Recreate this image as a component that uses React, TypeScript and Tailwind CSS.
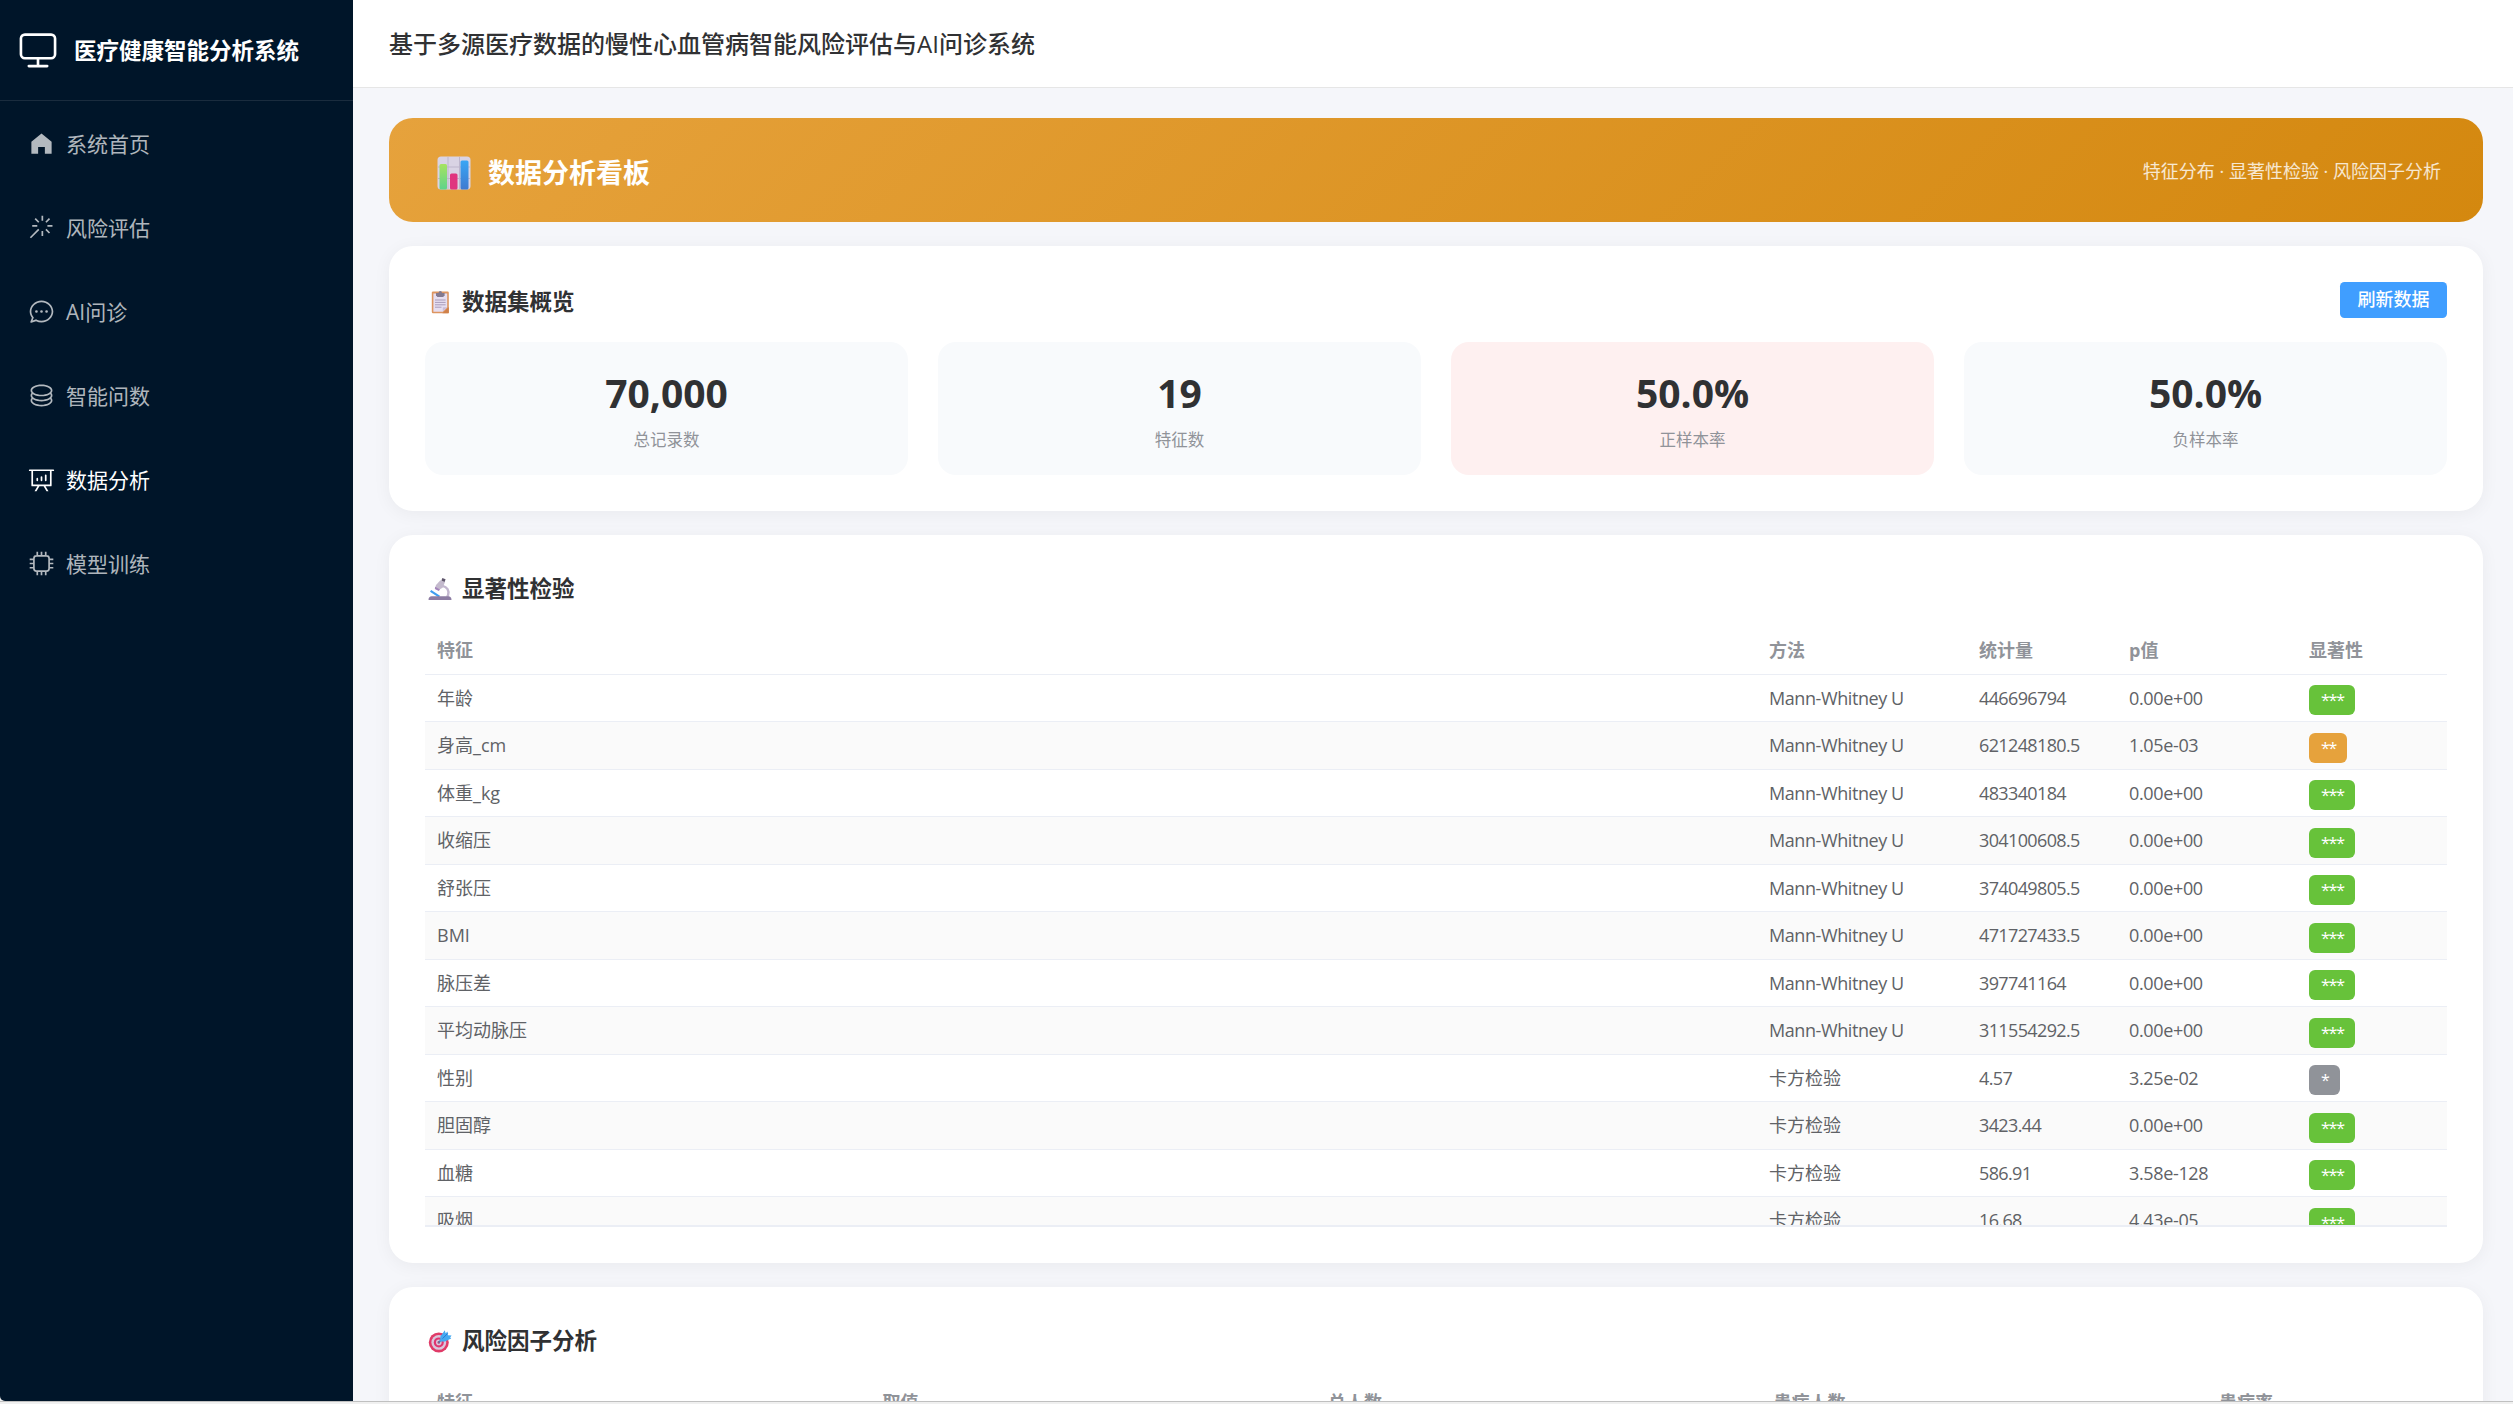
import type { ReactNode } from 'react';

const ICONS = {
  monitor:
    'M544 768v128h192a32 32 0 1 1 0 64H288a32 32 0 1 1 0-64h192V768H192A128 128 0 0 1 64 640V256a128 128 0 0 1 128-128h640a128 128 0 0 1 128 128v384a128 128 0 0 1-128 128zM192 192a64 64 0 0 0-64 64v384a64 64 0 0 0 64 64h640a64 64 0 0 0 64-64V256a64 64 0 0 0-64-64z',
  home: 'M512 128 128 447.936V896h255.936V640H640v256h255.936V447.936z',
  magic:
    'M512 64h64v192h-64zm0 576h64v192h-64zM160 480v-64h192v64zm576 0v-64h192v64zM249.856 199.04l45.248-45.184L430.848 289.6 385.6 334.848 249.856 199.104zM657.152 606.4l45.248-45.248 135.744 135.744-45.248 45.248zM114.048 923.2 68.8 877.952l316.8-316.8 45.248 45.248zM702.4 334.848 657.152 289.6l135.744-135.744 45.248 45.248z',
  chat: 'm174.72 855.68 135.296-45.12 23.68 11.84C388.096 849.536 448.576 864 512 864c211.84 0 384-166.784 384-352S723.84 160 512 160 128 326.784 128 512c0 69.12 24.96 139.264 70.848 199.232l22.08 28.8-46.272 115.584zm-45.248 82.56A32 32 0 0 1 89.6 896l58.368-145.92C94.72 680.32 64 596.864 64 512 64 299.904 256 96 512 96s448 203.904 448 416-192 416-448 416a461.056 461.056 0 0 1-206.912-48.384l-175.616 58.56zM512 563.2a51.2 51.2 0 1 1 0-102.4 51.2 51.2 0 0 1 0 102.4m192 0a51.2 51.2 0 1 1 0-102.4 51.2 51.2 0 0 1 0 102.4m-384 0a51.2 51.2 0 1 1 0-102.4 51.2 51.2 0 0 1 0 102.4',
  coin: 'm161.92 580.736 29.888 58.88C171.328 659.776 160 681.728 160 704c0 82.304 155.328 160 352 160s352-77.696 352-160c0-22.272-11.392-44.16-31.808-64.32l30.464-58.432C903.936 615.808 928 657.664 928 704c0 129.728-188.544 224-416 224S96 833.728 96 704c0-46.592 24.32-88.576 65.92-123.264zM161.92 388.736l29.888 58.88C171.328 467.84 160 489.792 160 512c0 82.304 155.328 160 352 160s352-77.696 352-160c0-22.272-11.392-44.16-31.808-64.32l30.464-58.432C903.936 423.808 928 465.664 928 512c0 129.728-188.544 224-416 224S96 641.728 96 512c0-46.592 24.32-88.576 65.92-123.264zM512 544c-227.456 0-416-94.272-416-224S284.544 96 512 96s416 94.272 416 224-188.544 224-416 224m0-64c196.672 0 352-77.696 352-160S708.672 160 512 160s-352 77.696-352 160 155.328 160 352 160',
  analysis:
    'm665.216 768 110.848 192h-73.856L591.36 768H433.024L322.176 960H248.32l110.848-192H160a32 32 0 0 1-32-32V192H64a32 32 0 0 1 0-64h896a32 32 0 1 1 0 64h-64v544a32 32 0 0 1-32 32zM832 192H192v512h640zM352 448a32 32 0 0 1 32 32v64a32 32 0 0 1-64 0v-64a32 32 0 0 1 32-32m160-64a32 32 0 0 1 32 32v128a32 32 0 0 1-64 0V416a32 32 0 0 1 32-32m160-64a32 32 0 0 1 32 32v192a32 32 0 1 1-64 0V352a32 32 0 0 1 32-32',
  cpu: 'M320 256a64 64 0 0 0-64 64v384a64 64 0 0 0 64 64h384a64 64 0 0 0 64-64V320a64 64 0 0 0-64-64zm0-64h384a128 128 0 0 1 128 128v384a128 128 0 0 1-128 128H320a128 128 0 0 1-128-128V320a128 128 0 0 1 128-128M480 64h64v160h-64zM640 64h64v160h-64zM320 64h64v160h-64zM480 800h64v160h-64zM640 800h64v160h-64zM320 800h64v160h-64zM64 480h160v64H64zM64 320h160v64H64zM64 640h160v64H64zM800 480h160v64H800zM800 320h160v64H800zM800 640h160v64H800z',
};

type IconName = keyof typeof ICONS;

const menu: { label: string; icon: IconName; active?: boolean }[] = [
  { label: '系统首页', icon: 'home' },
  { label: '风险评估', icon: 'magic' },
  { label: 'AI问诊', icon: 'chat' },
  { label: '智能问数', icon: 'coin' },
  { label: '数据分析', icon: 'analysis', active: true },
  { label: '模型训练', icon: 'cpu' },
];

const stats = [
  { value: '70,000', label: '总记录数' },
  { value: '19', label: '特征数' },
  { value: '50.0%', label: '正样本率', danger: true },
  { value: '50.0%', label: '负样本率' },
];

const MW = 'Mann-Whitney U';
const CHI = '卡方检验';

const tests = [
  ['年龄', MW, '446696794', '0.00e+00', '***'],
  ['身高_cm', MW, '621248180.5', '1.05e-03', '**'],
  ['体重_kg', MW, '483340184', '0.00e+00', '***'],
  ['收缩压', MW, '304100608.5', '0.00e+00', '***'],
  ['舒张压', MW, '374049805.5', '0.00e+00', '***'],
  ['BMI', MW, '471727433.5', '0.00e+00', '***'],
  ['脉压差', MW, '397741164', '0.00e+00', '***'],
  ['平均动脉压', MW, '311554292.5', '0.00e+00', '***'],
  ['性别', CHI, '4.57', '3.25e-02', '*'],
  ['胆固醇', CHI, '3423.44', '0.00e+00', '***'],
  ['血糖', CHI, '586.91', '3.58e-128', '***'],
  ['吸烟', CHI, '16.68', '4.43e-05', '***'],
];

const tagColor: Record<string, string> = {
  '***': 'bg-[#67c23a]',
  '**': 'bg-[#e6a23c]',
  '*': 'bg-[#909399]',
};

const TEST_COLS = 'grid grid-cols-[1332px_210px_150px_180px_150px]';
const RISK_COLS = 'grid grid-cols-[445.5px_445.5px_445.5px_445.5px_240px]';
const HEAD_ROW = 'h-12 items-center border-b border-[#ebeef5] pb-[2px] text-lg leading-none font-bold text-[#909399]';

function Icon({ name, className }: { name: IconName; className: string }) {
  return (
    <svg viewBox="0 0 1024 1024" fill="currentColor" className={className}>
      <path d={ICONS[name]} />
    </svg>
  );
}

function ChartEmoji() {
  return (
    <svg viewBox="0 0 34 34" className="h-[34px] w-[34px] shrink-0">
      <rect x="0.5" y="0.5" width="33" height="33" rx="3.5" fill="#d9d3e4" />
      <path d="M11 1v32M22.5 1v32M1 11h32M1 22.5h32" stroke="#bdb5cc" strokeWidth="1" />
      <rect x="2.5" y="8" width="7.5" height="25.5" rx="1.5" fill="url(#bar-green)" />
      <rect x="13" y="17.5" width="7.5" height="16" rx="1.5" fill="#e0357f" />
      <rect x="23.5" y="4.5" width="8" height="29" rx="1.5" fill="url(#bar-blue)" />
      <defs>
        <linearGradient id="bar-green" x1="0" y1="0" x2="0" y2="1">
          <stop offset="0" stopColor="#a6e35f" />
          <stop offset="1" stopColor="#5fd38c" />
        </linearGradient>
        <linearGradient id="bar-blue" x1="0" y1="0" x2="0" y2="1">
          <stop offset="0" stopColor="#38a6f5" />
          <stop offset="1" stopColor="#3f7ad0" />
        </linearGradient>
      </defs>
    </svg>
  );
}

function ClipboardEmoji() {
  return (
    <svg viewBox="0 0 24 24" className="h-6 w-6">
      <rect x="3.8" y="1.6" width="17" height="21.6" rx="1.2" fill="#dd9560" />
      <path d="M5.4 3.6h13.8v13.8l-4.4 4.4H5.4z" fill="#e6def0" />
      <path d="M20.8 17v6.2h-6.4z" fill="#cf8049" />
      <path d="M19.2 17.2 14.8 21.6v-4.4z" fill="#cbbcd8" />
      <path d="M7 10h10.6M7 12.4h10.6M7 14.8h10.6M7 17.2h6.5" stroke="#a99cbb" strokeWidth="1" />
      <path d="M8 3h8.6v2.2L15.2 7H9.4L8 5.2z" fill="#83798f" />
      <circle cx="12.3" cy="2.8" r="1.7" fill="#83798f" />
    </svg>
  );
}

function MicroscopeEmoji() {
  return (
    <svg viewBox="0 0 24 24" className="h-6 w-6">
      <path d="M14.5 8.8c4.6 1 7 4.8 5.6 9.2l-1 2" stroke="#c3b7cf" strokeWidth="2.4" fill="none" />
      <path d="m12.4 3.2 4.6 1.9-2.4 5.6-4.4 2.6-3.2-1.8 1-3.6z" fill="#c4bacd" />
      <path d="m14.4 1 3.2 1.3-1 2.6-3.2-1.3z" fill="#5f566b" />
      <path d="m7.2 9.8 4.8 2.6-1.2 1.6-4-2z" fill="#a486bb" />
      <path d="m2.6 13.8 8.8 5.8" stroke="#3f9df0" strokeWidth="2.2" />
      <path d="M.5 23c0-2.6 1.2-3.8 3.2-3.8h16.6c2 0 3.2 1.2 3.2 3.8z" fill="#8d7da3" />
    </svg>
  );
}

function TargetEmoji() {
  return (
    <svg viewBox="0 0 24 24" className="h-6 w-6">
      <circle cx="10.8" cy="13.4" r="10" fill="#e03b68" />
      <circle cx="10.8" cy="13.4" r="7.4" fill="#d9c6dc" />
      <circle cx="10.8" cy="13.4" r="5" fill="#e0356f" />
      <circle cx="10.8" cy="13.4" r="2.8" fill="#d9c6dc" />
      <circle cx="10.8" cy="13.4" r="1.3" fill="#a2527c" />
      <path d="m10.8 13.4 5-5" stroke="#4d7fb0" strokeWidth="1.6" />
      <path d="m12 12.4.4-5 4.4-6.2.8 3 2-1.6.4 3.6 3.6.4-1.4 2 1 .8-6.2 3z" fill="#45aaf0" />
      <path d="m14.5 9.6 5.2-5.2" stroke="#2678d8" strokeWidth="1" />
    </svg>
  );
}

function SectionTitle({ icon, children }: { icon: ReactNode; children: ReactNode }) {
  return (
    <h3 className="flex h-8 items-center gap-[10px] pt-[3px] pl-[3px] text-[22.5px] leading-8 font-bold text-[#303133]">
      {icon}
      <span>{children}</span>
    </h3>
  );
}

function Card({ children, className = '' }: { children: ReactNode; className?: string }) {
  return (
    <section className={`shrink-0 rounded-3xl bg-white px-9 pt-9 shadow-[0_3px_18px_rgba(0,0,0,0.05)] ${className}`}>
      {children}
    </section>
  );
}

function Sidebar() {
  return (
    <aside className="flex w-[353px] shrink-0 flex-col bg-[#001529]">
      <div className="flex h-[101px] items-center gap-[15px] border-b border-white/10 pb-[3px] pl-[17px] text-white">
        <Icon name="monitor" className="h-[42px] w-[42px]" />
        <span className="pt-[4px] text-[22.5px] font-bold whitespace-nowrap">医疗健康智能分析系统</span>
      </div>
      <nav>
        {menu.map((item) => (
          <a
            key={item.label}
            className={`flex h-[84px] items-center gap-[7px] pl-[23px] text-[21px] ${item.active ? 'text-white' : 'text-white/70'}`}
          >
            <span className="flex w-9 justify-center">
              <Icon name={item.icon} className="h-[27px] w-[27px]" />
            </span>
            <span className="pt-[3px]">{item.label}</span>
          </a>
        ))}
      </nav>
    </aside>
  );
}

export default function App() {
  return (
    <div className="flex h-[1404px] w-[2513px] flex-col overflow-hidden bg-[#f0f0f0] font-['Open_Sans','Noto_Sans_CJK_SC',sans-serif]">
      <div className="flex h-[1401px] overflow-hidden rounded-bl-[5px]">
        <Sidebar />

        <div className="flex flex-1 flex-col bg-[#f5f6fa]">
          <header className="flex h-[88px] shrink-0 items-center border-b border-[#e6e6e6] bg-white pl-9">
            <h1 className="text-2xl font-medium text-[#303133]">基于多源医疗数据的慢性心血管病智能风险评估与AI问诊系统</h1>
          </header>

          <main className="flex w-[2130px] flex-1 flex-col gap-6 overflow-visible pt-[30px] pl-9">
            <div className="flex h-[104px] shrink-0 items-center justify-between rounded-3xl bg-[linear-gradient(135deg,#e6a23c,#d4880f)] pr-[42px] pl-12">
              <div className="flex items-center gap-[17px] pt-[6px]">
                <ChartEmoji />
                <h2 className="text-[27px] font-bold text-white">数据分析看板</h2>
              </div>
              <span className="pt-[2px] text-lg text-white/80">特征分布 · 显著性检验 · 风险因子分析</span>
            </div>

            <Card className="h-[265px]">
              <div className="flex h-9 items-center justify-between">
                <SectionTitle icon={<ClipboardEmoji />}>数据集概览</SectionTitle>
                <button className="h-9 w-[107px] rounded-[4.5px] bg-[#409eff] pb-[2px] text-lg leading-none font-medium text-white">
                  刷新数据
                </button>
              </div>
              <div className="mt-6 grid grid-cols-4 gap-[30px]">
                {stats.map((s) => (
                  <div
                    key={s.label}
                    className={`flex h-[133px] flex-col items-center rounded-[18px] pt-[23px] ${s.danger ? 'bg-[#fef0f0]' : 'bg-[#f8fafc]'}`}
                  >
                    <div className="text-[39px] leading-[55px] font-bold text-[#303133]">{s.value}</div>
                    <div className="mt-2 text-[16.5px] leading-6 text-[#909399]">{s.label}</div>
                  </div>
                ))}
              </div>
            </Card>

            <Card className="h-[728px]">
              <SectionTitle icon={<MicroscopeEmoji />}>显著性检验</SectionTitle>
              <div className="mt-6 h-[600px] overflow-hidden border-b-2 border-[#ebeef5]">
                <div className={`${TEST_COLS} ${HEAD_ROW}`}>
                  {['特征', '方法', '统计量', 'p值', '显著性'].map((h) => (
                    <div key={h} className="px-3">
                      {h}
                    </div>
                  ))}
                </div>
                {tests.map(([feature, method, stat, p, sig], i) => {
                  const cell = i % 2 ? 'px-3 pb-[2px] text-lg leading-6' : 'px-3 text-lg leading-6';
                  return (
                    <div
                      key={feature}
                      className={`${TEST_COLS} items-center border-b border-[#ebeef5] text-[#606266] ${i % 2 ? 'h-12 bg-[#fafafa]' : 'h-[47px] bg-white'}`}
                    >
                      <div className={cell}>{feature}</div>
                      <div className={`${cell} ${method === MW ? 'tracking-[-0.42px]' : ''}`}>{method}</div>
                      <div className={`${cell} tracking-[-0.63px]`}>{stat}</div>
                      <div className={`${cell} tracking-[-0.35px]`}>{p}</div>
                      <div className={i % 2 ? 'px-3 pt-[5px]' : 'px-3 pt-[4px]'}>
                        <span
                          className={`flex h-[30px] w-fit items-center rounded-md pr-[11px] pl-3 text-[16px] leading-none tracking-[-1.2px] text-white ${tagColor[sig]}`}
                        >
                          {sig}
                        </span>
                      </div>
                    </div>
                  );
                })}
              </div>
            </Card>

            <Card className="h-[400px]">
              <SectionTitle icon={<TargetEmoji />}>风险因子分析</SectionTitle>
              <div className={`${RISK_COLS} ${HEAD_ROW} mt-6`}>
                {['特征', '取值', '总人数', '患病人数', '患病率'].map((h) => (
                  <div key={h} className="px-3">
                    {h}
                  </div>
                ))}
              </div>
            </Card>
          </main>
        </div>
      </div>
      <div className="h-[3px] border-t border-[#c0c0c0]" />
    </div>
  );
}
